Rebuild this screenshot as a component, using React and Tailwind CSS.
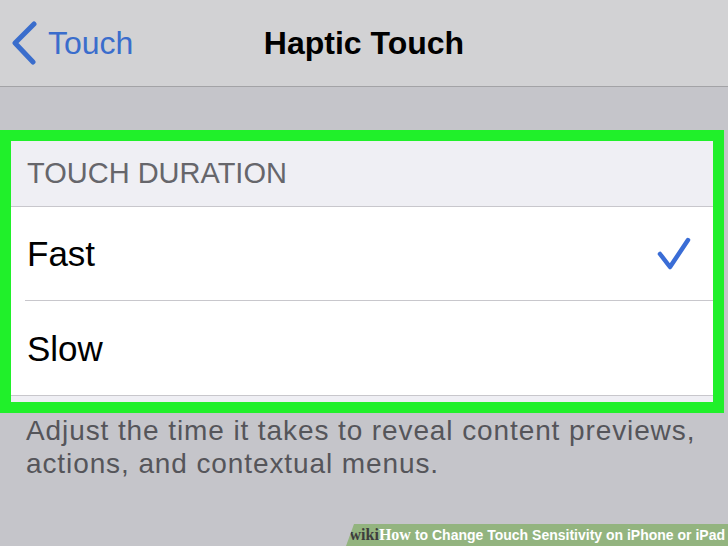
import React from 'react';

const App = () => {
  return (
    <div className="relative w-[728px] h-[546px] overflow-hidden bg-[#c5c5ca] font-['Liberation_Sans',sans-serif]">
      {/* nav bar */}
      <div className="h-[87px] bg-[#d2d2d4] border-b border-[#a3a3a6] grid grid-cols-[1fr_auto_1fr] items-center">
        <div className="flex items-center pl-[12px] gap-[10px] text-[#3a6dcc]">
          <svg width="26" height="44" viewBox="0 0 26 44">
            <path d="M22 3 L3 22 L21 41" fill="none" stroke="currentColor" strokeWidth="5" strokeLinecap="round" strokeLinejoin="round" />
          </svg>
          <span className="text-[32px] leading-none">Touch</span>
        </div>
        <div className="text-[32px] font-bold leading-none text-black">Haptic Touch</div>
        <div />
      </div>

      <div className="h-[43px]" />

      {/* highlighted group */}
      <div className="mr-[4px] border-[11px] border-[#20f02a]">
        <div className="h-[66px] bg-[#efeff4] border-b border-[#c8c7cc] flex items-center pl-[16px]">
          <span className="text-[29px] leading-none text-[#66666b]">TOUCH DURATION</span>
        </div>
        <div className="bg-white">
          <div className="h-[93px] flex items-center justify-between pl-[16px] pr-[22px]">
            <span className="text-[35px] leading-none text-black">Fast</span>
            <svg width="34" height="34" viewBox="0 0 34 34" className="text-[#3a6dd6]">
              <path d="M3 17 L13 30 L31 3" fill="none" stroke="currentColor" strokeWidth="4.5" strokeLinecap="round" strokeLinejoin="round" />
            </svg>
          </div>
          <div className="ml-[14px] h-px bg-[#c8c7cc]" />
          <div className="h-[94px] flex items-center pl-[16px]">
            <span className="text-[35px] leading-none text-black">Slow</span>
          </div>
          <div className="h-px bg-[#c8c7cc]" />
          <div className="h-[6px] bg-[#efeff4]" />
        </div>
      </div>

      <p className="px-[26px] pt-[1px] text-[28px] leading-[33px] tracking-[0.9px] text-[#55555a]">
        Adjust the time it takes to reveal content previews, actions, and contextual menus.
      </p>

      {/* watermark */}
      <div className="absolute right-0 bottom-0 w-[382px] h-[22px] bg-[#93b47f] [clip-path:polygon(8px_0,100%_0,100%_100%,0_100%)] flex items-center justify-end pr-[3px] whitespace-nowrap">
        <span className="font-['Liberation_Serif',serif] font-bold text-[16px] text-[#3d3d3d]">wiki</span>
        <span className="font-['Liberation_Serif',serif] font-bold text-[16px] text-white mr-[4px]">How</span>
        <span className="text-[14px] font-bold text-white">to Change Touch Sensitivity on iPhone or iPad</span>
      </div>
    </div>
  );
};

export default App;
